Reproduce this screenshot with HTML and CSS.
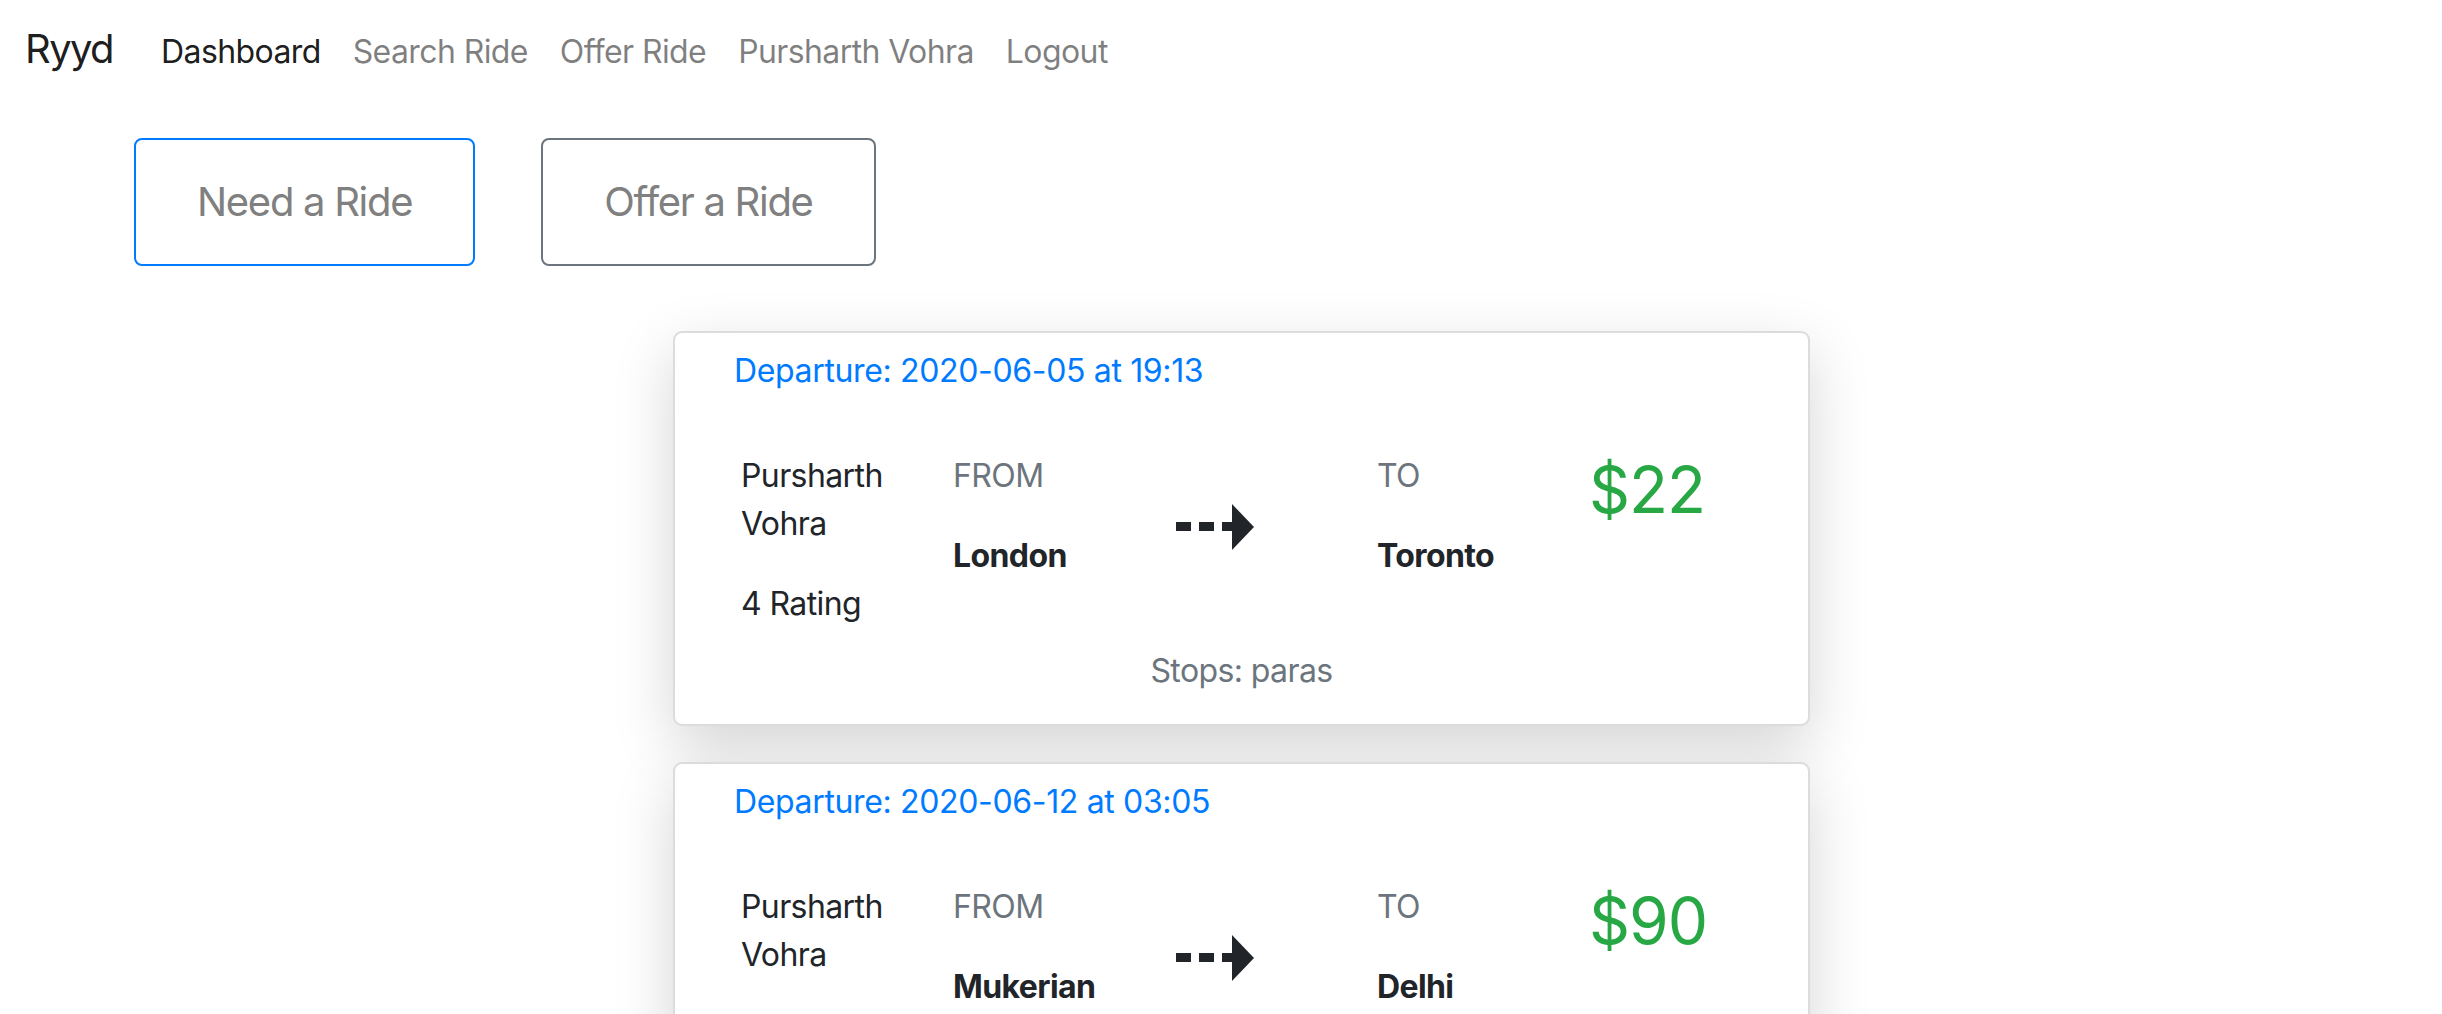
FILE: index.html
```html
<!DOCTYPE html>
<html lang="en">
<head>
<meta charset="utf-8">
<title>Ryyd</title>
<link rel="stylesheet" href="styles.css">
</head>
<body>
<nav class="navbar">
  <a class="brand" href="#">Ryyd</a>
  <ul class="nav">
    <li><a class="nav-link active" href="#">Dashboard</a></li>
    <li><a class="nav-link" href="#">Search Ride</a></li>
    <li><a class="nav-link" href="#">Offer Ride</a></li>
    <li><a class="nav-link" href="#">Pursharth Vohra</a></li>
    <li><a class="nav-link" href="#">Logout</a></li>
  </ul>
</nav>

<div class="actions">
  <button class="btn btn-primary">Need a Ride</button>
  <button class="btn btn-secondary">Offer a Ride</button>
</div>

<main class="rides">
  <article class="card">
    <p class="departure">Departure: 2020-06-05 at 19:13</p>
    <div class="ride-row">
      <div class="driver">
        <p>Pursharth Vohra</p>
        <p class="last">4 Rating</p>
      </div>
      <div class="place">
        <p class="label">FROM</p>
        <p class="city">London</p>
      </div>
      <div class="arrow">
        <svg width="80" height="46" viewBox="0 0 80 46" aria-hidden="true">
          <rect x="0" y="18" width="15" height="9" fill="#212529"/>
          <rect x="23" y="18" width="15" height="9" fill="#212529"/>
          <rect x="46" y="18" width="12" height="9" fill="#212529"/>
          <polygon points="56,0 78,23 56,46" fill="#212529"/>
        </svg>
      </div>
      <div class="place">
        <p class="label">TO</p>
        <p class="city">Toronto</p>
      </div>
      <h2 class="price">$22</h2>
    </div>
    <p class="stops">Stops: paras</p>
  </article>

  <article class="card">
    <p class="departure">Departure: 2020-06-12 at 03:05</p>
    <div class="ride-row">
      <div class="driver">
        <p>Pursharth Vohra</p>
        <p class="last">4 Rating</p>
      </div>
      <div class="place">
        <p class="label">FROM</p>
        <p class="city">Mukerian</p>
      </div>
      <div class="arrow">
        <svg width="80" height="46" viewBox="0 0 80 46" aria-hidden="true">
          <rect x="0" y="18" width="15" height="9" fill="#212529"/>
          <rect x="23" y="18" width="15" height="9" fill="#212529"/>
          <rect x="46" y="18" width="12" height="9" fill="#212529"/>
          <polygon points="56,0 78,23 56,46" fill="#212529"/>
        </svg>
      </div>
      <div class="place">
        <p class="label">TO</p>
        <p class="city">Delhi</p>
      </div>
      <h2 class="price">$90</h2>
    </div>
    <p class="stops">Stops: none</p>
  </article>
</main>
</body>
</html>
```

FILE: styles.css
```css
* { box-sizing: border-box; }

html, body { margin: 0; padding: 0; }

body {
  font-family: Inter, "Noto Sans", "Liberation Sans", sans-serif;
  font-size: 32px;
  line-height: 48px;
  color: #212529;
  background: #fff;
}

p { margin: 0; }

/* navbar */
.navbar {
  display: flex;
  align-items: baseline;
  padding: 19px 32px 19px 25px;
}

.brand {
  font-size: 40px;
  line-height: 60px;
  color: rgba(0, 0, 0, 0.9);
  text-decoration: none;
  margin-right: 32px;
  letter-spacing: -1.6px;
}

.nav {
  display: flex;
  list-style: none;
  margin: 0;
  padding: 0;
}

.nav-link {
  display: block;
  padding: 0 16px;
  color: rgba(0, 0, 0, 0.5);
  text-decoration: none;
  letter-spacing: -0.6px;
}

.nav-link.active { color: rgba(0, 0, 0, 0.9); }

/* action buttons */
.actions {
  display: flex;
  gap: 66px;
  padding: 40px 0 0 134px;
}

.btn {
  font-family: inherit;
  font-size: 40px;
  line-height: 60px;
  padding: 32px 61px;
  background: #fff;
  color: #808080;
  border: 2px solid;
  border-radius: 8px;
  letter-spacing: -1.3px;
}

.btn-primary { border-color: #007bff; }
.btn-secondary { border-color: #6c757d; }

/* ride cards */
.rides {
  padding: 65px 0 0 673px;
}

.card {
  width: 1137px;
  border: 2px solid #dcdcdc;
  border-radius: 9px;
  padding: 14px 0 29px 59px;
  margin-bottom: 36px;
  box-shadow: 0 20px 60px rgba(0, 0, 0, 0.17);
  background: #fff;
}

.departure {
  color: #007bff;
  margin-bottom: 57px;
  letter-spacing: -0.35px;
}

.ride-row {
  display: grid;
  grid-template-columns: 212px 223px 201px 212px 1fr;
  padding-left: 7px;
  align-items: start;
}

.driver p { margin-bottom: 32px; letter-spacing: -0.6px; }
.driver p.last { margin-bottom: 0; }

.label {
  color: #6c757d;
  margin-bottom: 32px;
  letter-spacing: -0.6px;
}

.city {
  font-weight: 700;
  letter-spacing: -0.6px;
}

.arrow {
  margin-top: 52px;
  height: 46px;
}

.arrow svg { display: block; }

.price {
  margin: 0;
  font-size: 64px;
  line-height: 1.2;
  font-weight: 400;
  color: #28a745;
  letter-spacing: -1px;
}

.stops {
  margin-top: 19px;
  text-align: center;
  color: #6c757d;
  padding-right: 59px;
  letter-spacing: -0.6px;
}
```
